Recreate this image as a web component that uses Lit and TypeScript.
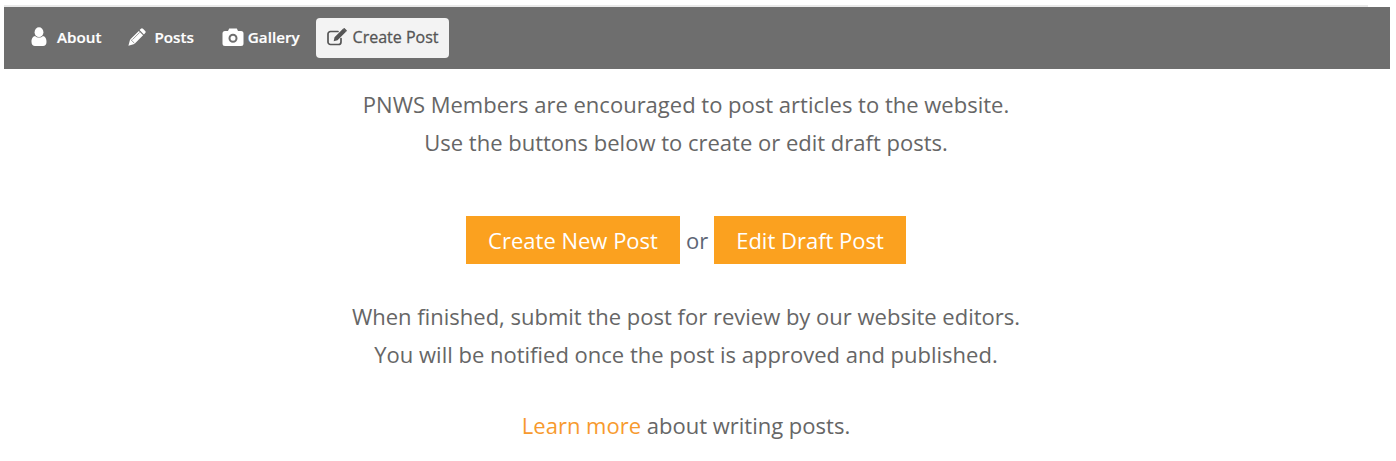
import { LitElement, html, css } from "lit";
import { customElement } from "lit/decorators.js";

@customElement("app-root")
export class AppRoot extends LitElement {
  static styles = css`
    :host { display: block; height: 461px; background: #fff; font-family: "Open Sans", sans-serif; padding: 5px 6px 0 4px; box-sizing: border-box; overflow: hidden; }
    .strip { height: 2px; background: #e9e9e9; margin-right: 22px; }
    nav { height: 62px; background: #6e6e6e; display: flex; align-items: center; padding: 0 0 0 16px; gap: 0; box-sizing: border-box; }
    .tab { display: flex; align-items: center; height: 40px; box-sizing: border-box; color: #fff; font-size: 15.2px; font-weight: 600; border-radius: 4px; white-space: nowrap; -webkit-text-stroke: 0.2px #fff; }
    .tab span { margin-top: -2px; }
    .tab svg { display: block; flex: none; margin-top: -2px; }
    .about { padding: 0 11px 0 11px; gap: 10px; }
    .posts { padding: 0 11px 0 10px; gap: 8px; margin-left: 6px; }
    .gallery { padding: 0 11px 0 10px; gap: 4px; margin-left: 7px; }
    .active { background: #f3f3f3; color: #555; padding: 0 11px 0 11px; gap: 5px; margin-left: 5px; font-size: 16px; font-weight: 400; width: 133px; -webkit-text-stroke: 0.3px #555; }
    main { display: flex; flex-direction: column; align-items: center; color: #666; font-size: 22px; line-height: 38px; margin-right: 22px; }
    p { margin: 0; text-align: center; }
    .intro { margin-top: 16px; }
    .actions { display: flex; align-items: center; gap: 6px; margin-top: 55px; color: #5d6675; }
    .btn { display: block; background: #fba11f; color: #fff; height: 48px; line-height: 48px; padding: 0 22px; }
    .finish { margin-top: 33px; }
    .learn { margin-top: 33px; }
    .learn a { color: #f79a2e; text-decoration: none; }
  `;

  render() {
    return html`
      <div class="strip"></div>
      <nav>
        <div class="tab about">
          <svg width="16" height="20" viewBox="0 0 16 20"><ellipse cx="8" cy="5.2" rx="4.4" ry="4.9" fill="#fff"/><path d="M0.5 15c0-4 1.6-5.6 3.6-6 1 1 2.4 1.5 3.9 1.5s2.900-.5 3.900-1.500c2 .4 3.600 2 3.600 6 0 2.800-1.500 4-3.500 4H4c-2 0-3.500-1.200-3.500-4z" fill="#fff"/></svg>
          <span>About</span>
        </div>
        <div class="tab posts">
          <svg width="18" height="18" viewBox="0 0 18 18"><path d="M12.900 .8a1.500 1.500 0 0 1 2.100 0l2.200 2.200a1.500 1.500 0 0 1 0 2.100l-1.300 1.300-4.300-4.300zM10.800 2.900l4.300 4.300-8.700 8.700-6 1.900 1.700-6.200z" fill="#fff"/><path d="M2.700 11.500l3.800 3.800M11.800 4.300l-7.300 7.300" stroke="#6e6e6e" stroke-width=".7" fill="none"/></svg>
          <span>Posts</span>
        </div>
        <div class="tab gallery">
          <svg width="22" height="18" viewBox="0 0 22 18"><path fill-rule="evenodd" d="M3 3h3l1.200-2.500h7.600L16 3h3a2.500 2.500 0 0 1 2.500 2.500v10A2.500 2.500 0 0 1 19 18H3a2.500 2.500 0 0 1-2.500-2.500v-10A2.500 2.500 0 0 1 3 3zm8 2.800a4.500 4.500 0 1 0 0 9 4.500 4.500 0 0 0 0-9zm0 2a2.500 2.500 0 1 1 0 5 2.500 2.500 0 0 1 0-5z" fill="#fff"/></svg>
          <span>Gallery</span>
        </div>
        <div class="tab active">
          <svg width="21" height="18" viewBox="0 0 21 18"><path d="M14 10.500v3.500a2.500 2.500 0 0 1-2.500 2.500H3.500A2.500 2.500 0 0 1 1 14V6a2.500 2.500 0 0 1 2.500-2.500H11" fill="none" stroke="#555" stroke-width="1.700" stroke-linecap="round"/><path d="M16 .8l3 3-8.500 8.500-3.800.9.800-3.900zM16.800 .2l.6-.2 2.500 2.500-.2.600-.6.600-3-3z" fill="#555"/></svg>
          <span>Create Post</span>
        </div>
      </nav>
      <main>
        <div class="intro">
          <p>PNWS Members are encouraged to post articles to the website.</p>
          <p>Use the buttons below to create or edit draft posts.</p>
        </div>
        <div class="actions">
          <a class="btn">Create New Post</a>
          <span>or</span>
          <a class="btn">Edit Draft Post</a>
        </div>
        <div class="finish">
          <p>When finished, submit the post for review by our website editors.</p>
          <p>You will be notified once the post is approved and published.</p>
        </div>
        <p class="learn"><a>Learn more</a> about writing posts.</p>
      </main>
    `;
  }
}
